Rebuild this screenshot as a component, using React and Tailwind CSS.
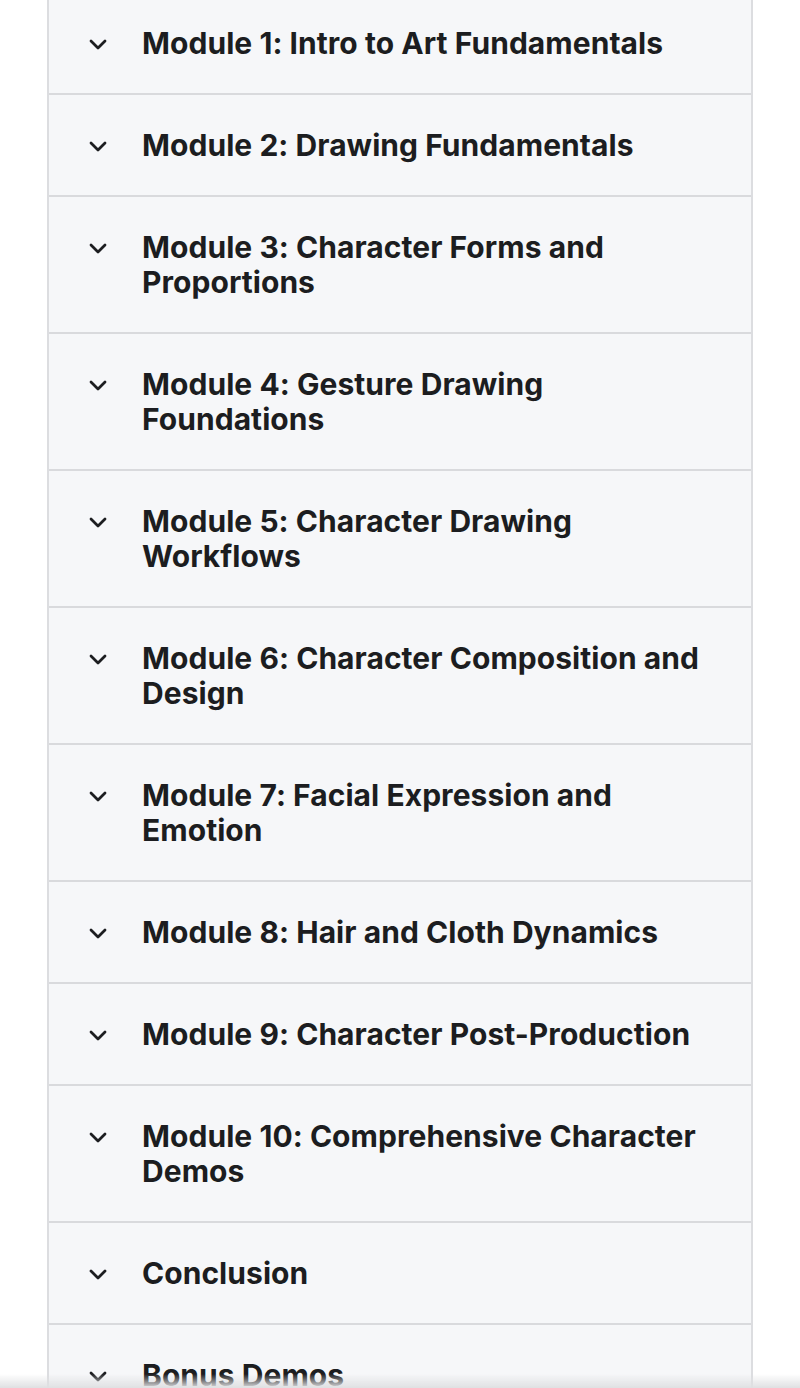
import React from "react";

const modules = [
  "Module 1: Intro to Art Fundamentals",
  "Module 2: Drawing Fundamentals",
  "Module 3: Character Forms and Proportions",
  "Module 4: Gesture Drawing Foundations",
  "Module 5: Character Drawing Workflows",
  "Module 6: Character Composition and Design",
  "Module 7: Facial Expression and Emotion",
  "Module 8: Hair and Cloth Dynamics",
  "Module 9: Character Post-Production",
  "Module 10: Comprehensive Character Demos",
  "Conclusion",
  "Bonus Demos",
];

// small bold chevron used on every accordion row
const Chevron = () => (
  <svg width="18" height="11" viewBox="0 0 18 11" fill="none">
    <path d="M2 2l7 7 7-7" stroke="#1c1d20" strokeWidth="2.8" strokeLinecap="round" strokeLinejoin="round" />
  </svg>
);

const App = () => {
  return (
    <div className="relative min-h-screen overflow-hidden bg-white" style={{ fontFamily: "Inter, 'Noto Sans', sans-serif" }}>
      <div className="-mt-[7px] ml-[47px] w-[706px] border-x-2 border-[#dcdde0] bg-[#f6f7f9]">
        {modules.map((title) => (
          <div key={title} className="flex items-start border-b-2 border-[#d9dadd] pt-[33px] pb-[32px] pl-[40px] pr-[40px]">
            <div className="flex h-[35px] w-[18px] shrink-0 items-center justify-center pt-[2px]">
              <Chevron />
            </div>
            <div className="ml-[35px] text-[30px] font-bold leading-[35px] tracking-[0.05px] text-[#1c1d20]">{title}</div>
          </div>
        ))}
      </div>
      <div className="pointer-events-none fixed bottom-0 left-0 right-0 h-[14px] bg-gradient-to-b from-transparent to-[#dfe0e2]" />
    </div>
  );
};

export default App;
